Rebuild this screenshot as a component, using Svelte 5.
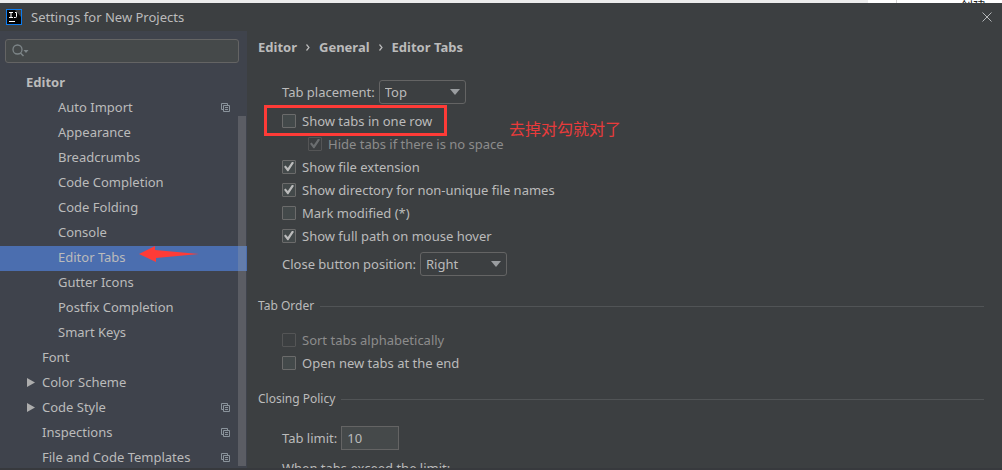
<script lang="ts">
  type TreeItem = {
    label: string;
    level: number;
    copy?: boolean;
    expandable?: boolean;
  };

  const tree: TreeItem[] = [
    { label: "Editor", level: 0 },
    { label: "Auto Import", level: 2, copy: true },
    { label: "Appearance", level: 2 },
    { label: "Breadcrumbs", level: 2 },
    { label: "Code Completion", level: 2 },
    { label: "Code Folding", level: 2 },
    { label: "Console", level: 2 },
    { label: "Editor Tabs", level: 2 },
    { label: "Gutter Icons", level: 2 },
    { label: "Postfix Completion", level: 2 },
    { label: "Smart Keys", level: 2 },
    { label: "Font", level: 1 },
    { label: "Color Scheme", level: 1, expandable: true },
    { label: "Code Style", level: 1, expandable: true, copy: true },
    { label: "Inspections", level: 1, copy: true },
    { label: "File and Code Templates", level: 1, copy: true }
  ];

  let selected = $state("Editor Tabs");
  let search = $state("");
  let placement = $state("Top");
  let closePosition = $state("Right");
  let tabLimit = $state("10");

  let oneRow = $state(false);
  let hideTabs = $state(true);
  let fileExtension = $state(true);
  let directory = $state(true);
  let markModified = $state(false);
  let fullPath = $state(true);
  let sortTabs = $state(false);
  let openAtEnd = $state(false);
</script>

<div class="screen">
  <!-- sliver of the window behind the dialog -->
  <div class="backdrop" aria-hidden="true">
    <div class="backdrop-side"><span>创建 +</span></div>
  </div>

  <div class="dialog">
    <header class="titlebar">
      <svg class="logo" width="16" height="16" viewBox="0 0 16 16" aria-hidden="true">
        <rect width="16" height="16" fill="#0b7cf0" />
        <rect x="1" y="1" width="14" height="14" fill="#050505" />
        <path d="M9 1h6v7z" fill="#3c3c3c" />
        <path d="M3 3.500h4M5 3.500v5M3 8.500h4M9 3.500h1.500v4q0 1-1 1H8M3 12.500h6" fill="none" stroke="#fff" stroke-width="1" />
      </svg>
      <h1>Settings for New Projects</h1>
      <button class="close" aria-label="Close">
        <svg width="10" height="10" viewBox="0 0 10 10">
          <path d="M0.500 0.500l9 9M9.500 0.500l-9 9" stroke="#b4b7b9" stroke-width="1" />
        </svg>
      </button>
    </header>

    <div class="body">
      <aside class="sidebar">
        <div class="search">
          <svg width="18" height="14" viewBox="0 0 18 14" aria-hidden="true">
            <circle cx="5.500" cy="5.500" r="4.500" fill="none" stroke="#7d8588" stroke-width="1.300" />
            <path d="M8.500 9l3 3" stroke="#7d8588" stroke-width="1.500" />
            <path d="M11.500 6h5l-2.500 3z" fill="#7d8588" />
          </svg>
          <input type="text" aria-label="Search settings" bind:value={search} />
        </div>

        <div class="tree-area">
          <ul class="tree">
            {#each tree as item}
              <li>
                <button
                  class="node level-{item.level}"
                  class:selected={selected === item.label}
                  onclick={() => (selected = item.label)}
                >
                  <span class="twisty">
                    {#if item.expandable}
                      <svg width="9" height="9" viewBox="0 0 9 9">
                        <path d="M1 0l8 4.500l-8 4.500z" fill="#adadad" />
                      </svg>
                    {/if}
                  </span>
                  <span class="label">{item.label}</span>
                  {#if item.copy}
                    <svg class="copy" width="9" height="9" viewBox="0 0 9 9">
                      <path d="M2 6.500H0.500v-6h6V2" fill="none" stroke="#8b949c" />
                      <path d="M2.500 2.500h6v6h-6zM4 4.500h3M4 6.500h3" fill="none" stroke="#8b949c" />
                    </svg>
                  {/if}
                </button>
              </li>
            {/each}
          </ul>
          <div class="scroll-thumb"></div>
          <svg class="arrow" width="60" height="16" viewBox="0 0 60 16" aria-hidden="true">
            <path d="M0 8L16 0V4L60 8L17 12V16z" fill="#ff3b37" />
          </svg>
        </div>
      </aside>

      <main class="content">
        <nav class="crumbs" aria-label="Breadcrumb">
          <span>Editor</span>
          <svg width="4" height="7" viewBox="0 0 4 7"><path d="M0.500 0.500l2.500 3l-2.500 3" /></svg>
          <span>General</span>
          <svg width="4" height="7" viewBox="0 0 4 7"><path d="M0.500 0.500l2.500 3l-2.500 3" /></svg>
          <span>Editor Tabs</span>
        </nav>

        <div class="group first">
          <div class="field">
            <label for="placement">Tab placement:</label>
            <div class="select">
              <select id="placement" bind:value={placement}>
                <option>Top</option>
                <option>Bottom</option>
                <option>Left</option>
                <option>Right</option>
                <option>None</option>
              </select>
              <svg width="10" height="6" viewBox="0 0 10 6"><path d="M0 0h10L5 6z" /></svg>
            </div>
          </div>

          <div class="checks">
            <div class="marked">
              <label class="check"><input type="checkbox" bind:checked={oneRow} />Show tabs in one row</label>
              <div class="mark-box" aria-hidden="true"></div>
              <span class="note">去掉对勾就对了</span>
            </div>
            <label class="check nested" class:disabled={!oneRow}>
              <input type="checkbox" bind:checked={hideTabs} disabled={!oneRow} />Hide tabs if there is no space
            </label>
            <label class="check"><input type="checkbox" bind:checked={fileExtension} />Show file extension</label>
            <label class="check"><input type="checkbox" bind:checked={directory} />Show directory for non-unique file names</label>
            <label class="check"><input type="checkbox" bind:checked={markModified} />Mark modified (*)</label>
            <label class="check"><input type="checkbox" bind:checked={fullPath} />Show full path on mouse hover</label>
          </div>

          <div class="field">
            <label for="close-position">Close button position:</label>
            <div class="select">
              <select id="close-position" bind:value={closePosition}>
                <option>Right</option>
                <option>Left</option>
                <option>None</option>
              </select>
              <svg width="10" height="6" viewBox="0 0 10 6"><path d="M0 0h10L5 6z" /></svg>
            </div>
          </div>
        </div>

        <h2>Tab Order</h2>
        <div class="group">
          <label class="check disabled"><input type="checkbox" bind:checked={sortTabs} disabled />Sort tabs alphabetically</label>
          <label class="check"><input type="checkbox" bind:checked={openAtEnd} />Open new tabs at the end</label>
        </div>

        <h2>Closing Policy</h2>
        <div class="group last">
          <div class="field">
            <label for="limit">Tab limit:</label>
            <input id="limit" class="limit" type="text" bind:value={tabLimit} />
          </div>
          <p>When tabs exceed the limit:</p>
        </div>
      </main>
    </div>
  </div>
</div>

<style>
  :global(body) {
    margin: 0;
    background: #3c3f41;
  }

  .screen {
    display: flex;
    flex-direction: column;
    height: 100vh;
    overflow: hidden;
    font-family: "Noto Sans", "Noto Sans CJK SC", sans-serif;
    font-size: 13px;
    line-height: 20px;
    color: #bbbbbb;
  }

  .screen * {
    box-sizing: border-box;
  }

  button,
  input,
  select {
    margin: 0;
    font: inherit;
    color: inherit;
  }

  /* Window behind */
  .backdrop {
    flex: none;
    display: flex;
    justify-content: flex-end;
    height: 3px;
    background: linear-gradient(to right, #ececec 0 868px, #ffffff 868px);
    overflow: hidden;
  }

  .backdrop-side {
    width: 106px;
    padding-left: 63px;
    border-left: 1px solid #d4d4d4;
    color: #222222;
    font-family: "Noto Sans CJK SC", sans-serif;
    line-height: 12px;
    white-space: nowrap;
  }

  /* Dialog */
  .dialog {
    flex: 1;
    display: flex;
    flex-direction: column;
    min-height: 0;
    background: #3c3f41;
    border-bottom: 2px solid #37393d;
  }

  .titlebar {
    flex: none;
    display: flex;
    align-items: center;
    gap: 9px;
    height: 28px;
    padding: 0 10px 0 6px;
  }

  .titlebar h1 {
    flex: 1;
    margin: 0;
    font-size: 13px;
    font-weight: 400;
  }

  .close {
    display: flex;
    padding: 0;
    border: 0;
    background: none;
  }

  .body {
    flex: 1;
    display: flex;
    min-height: 0;
  }

  /* Sidebar */
  .sidebar {
    flex: none;
    display: flex;
    flex-direction: column;
    width: 247px;
    background: #3f434c;
  }

  .search {
    flex: none;
    display: flex;
    align-items: center;
    height: 24px;
    margin: 8px 8px 8px 5px;
    padding-left: 6px;
    border: 1px solid #646464;
    border-radius: 3px;
    background: #45494a;
  }

  .search input {
    flex: 1;
    min-width: 0;
    border: 0;
    background: none;
    outline: none;
  }

  .tree-area {
    position: relative;
    flex: 1;
    min-height: 0;
    overflow: hidden;
  }

  .tree {
    margin: 0;
    padding: 0;
    list-style: none;
  }

  .node {
    display: flex;
    align-items: center;
    width: 100%;
    height: 25px;
    padding: 0 17px 3px 26px;
    border: 0;
    background: none;
    text-align: left;
  }

  .node.level-0 {
    font-weight: 700;
  }
  .node.level-0 .twisty {
    display: none;
  }
  .node.level-2 {
    padding-left: 42px;
  }
  .node.selected {
    background: #4b6eaf;
  }

  .twisty {
    display: flex;
    width: 16px;
  }

  .label {
    flex: 1;
    white-space: nowrap;
  }

  .scroll-thumb {
    position: absolute;
    top: 45px;
    right: 1px;
    bottom: 2px;
    width: 8px;
    background: rgba(166, 166, 166, 0.27);
  }

  .arrow {
    position: absolute;
    top: 175px;
    left: 139px;
  }

  /* Content */
  .content {
    flex: 1;
    min-width: 0;
    padding: 6px 18px 0 11px;
    overflow: hidden;
  }

  .crumbs {
    display: flex;
    align-items: center;
    gap: 9px;
    height: 20px;
    margin-bottom: 23px;
    font-weight: 700;
  }

  .crumbs path {
    fill: none;
    stroke: #bbbbbb;
    stroke-width: 1.2;
  }

  .group {
    padding-left: 24px;
  }

  .group.first {
    padding-bottom: 5px;
  }

  .group.last {
    padding-top: 5px;
  }

  .field {
    display: flex;
    align-items: center;
    gap: 4px;
    height: 24px;
  }

  .select {
    position: relative;
    width: 87px;
  }

  .select select {
    display: block;
    width: 100%;
    height: 24px;
    padding: 0 24px 0 5px;
    border: 1px solid #646464;
    border-radius: 3px;
    background: #3c3f41;
    appearance: none;
    outline: none;
  }

  .select svg {
    position: absolute;
    top: 9px;
    right: 6px;
    fill: #9a9da0;
    pointer-events: none;
  }

  .checks {
    padding: 5px 0;
  }

  .check {
    display: flex;
    align-items: center;
    gap: 6px;
    height: 23px;
  }

  .check.nested {
    padding-left: 26px;
  }

  .check.disabled {
    color: #8c8c8c;
  }

  .check input {
    flex: none;
    display: grid;
    place-content: center;
    width: 14px;
    height: 14px;
    border: 1px solid #6b6b6b;
    border-radius: 1px;
    background: #43494a;
    appearance: none;
  }

  .check input:checked::before {
    content: "";
    width: 10px;
    height: 10px;
    background: #bbbbbb;
    clip-path: polygon(0 52%, 16% 40%, 38% 64%, 82% 0, 100% 12%, 44% 98%, 34% 98%);
  }

  .check input:disabled {
    border-color: #545556;
    background: #3c3f41;
  }
  .check input:disabled::before {
    background: #6b6e70;
  }

  /* Red annotations */
  .marked {
    position: relative;
  }

  .mark-box {
    position: absolute;
    top: -4px;
    left: -18px;
    width: 183px;
    height: 31px;
    border: 3px solid #ff3b37;
    pointer-events: none;
  }

  .note {
    position: absolute;
    top: 7px;
    left: 227px;
    font-family: "Noto Sans CJK SC", sans-serif;
    font-size: 16px;
    line-height: 24px;
    color: #e93b3b;
    white-space: nowrap;
  }

  h2 {
    display: flex;
    align-items: center;
    gap: 6px;
    height: 16px;
    margin: 17px 0 14px;
    font-size: 12px;
    font-weight: 400;
  }

  h2::after {
    content: "";
    flex: 1;
    height: 1px;
    background: #515456;
  }

  .limit {
    width: 58px;
    height: 24px;
    padding: 0 5px;
    border: 1px solid #646464;
    background: #45494a;
    outline: none;
  }

  p {
    margin: 8px 0 0;
    line-height: 20px;
  }
</style>
